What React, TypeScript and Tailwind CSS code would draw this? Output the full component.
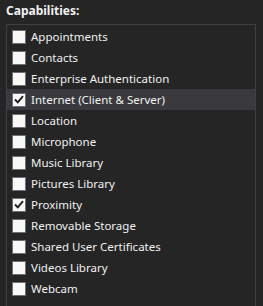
import React from 'react'

const items = [
  { label: 'Appointments', checked: false },
  { label: 'Contacts', checked: false },
  { label: 'Enterprise Authentication', checked: false },
  { label: 'Internet (Client & Server)', checked: true, selected: true },
  { label: 'Location', checked: false },
  { label: 'Microphone', checked: false },
  { label: 'Music Library', checked: false },
  { label: 'Pictures Library', checked: false },
  { label: 'Proximity', checked: true },
  { label: 'Removable Storage', checked: false },
  { label: 'Shared User Certificates', checked: false },
  { label: 'Videos Library', checked: false },
  { label: 'Webcam', checked: false },
]

function Box({ checked }: { checked: boolean }) {
  return (
    <span className="w-[14px] h-[14px] shrink-0 border border-[#707070] bg-[#f8f8f8] flex items-center justify-center">
      {checked && (
        <svg width="10" height="9" viewBox="0 0 10 9">
          <path d="M1 4.5 L3.8 7.3 L9 1.2" fill="none" stroke="#1e1e1e" strokeWidth="1.9" />
        </svg>
      )}
    </span>
  )
}

export default function App() {
  return (
    <div
      className="w-[263px] h-[306px] bg-[#252526] text-[#f1f1f1] overflow-hidden"
      style={{ fontFamily: '"Noto Sans", "Open Sans", sans-serif' }}
    >
      <div className="pl-[6px] pt-[3px] h-[24px] text-[12px] font-bold leading-[16px]">Capabilities:</div>
      <div className="ml-[6px] w-[250px] border-l border-t border-r border-[#3f3f46] pt-[1px] pb-[10px]">
        {items.map((it) => (
          <div
            key={it.label}
            className={`h-[21px] flex items-center gap-[5px] pl-[5px] ${it.selected ? 'bg-[#3a3a3e]' : ''}`}
          >
            <Box checked={it.checked} />
            <span className="text-[11.5px] leading-[16px] whitespace-nowrap pt-[1px]">{it.label}</span>
          </div>
        ))}
      </div>
    </div>
  )
}
